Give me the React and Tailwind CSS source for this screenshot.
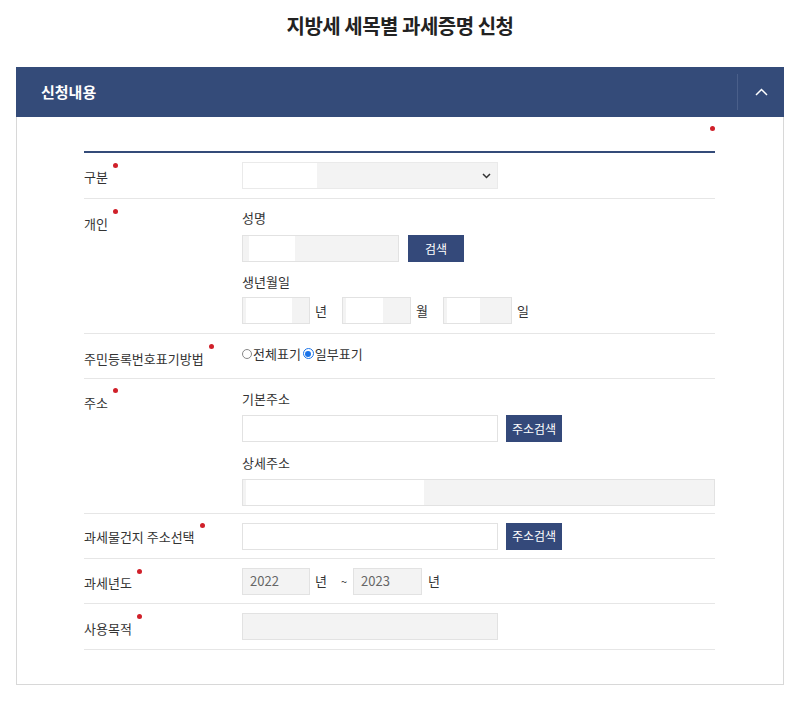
const font = { fontFamily: '"Noto Sans CJK KR", "Noto Sans", sans-serif' };

const Dot = () => (
  <span className="inline-block w-[5px] h-[5px] rounded-full bg-[#d0202a] ml-[5px] relative -top-[12px]" />
);

const Label = ({ children, className = "" }) => (
  <div className={"w-[158px] shrink-0 text-[13px] text-[#333] flex items-center " + className}>
    <span>{children}</span>
    <Dot />
  </div>
);

// input box: gray background with a white patch on the left
const Box = ({ w, white, offset = 3, full, children, className = "" }) => (
  <div
    className={
      "h-[27px] border border-[#e2e2e2] flex items-center relative " +
      (full ? "bg-white " : "bg-[#f3f3f3] ") +
      className
    }
    style={{ width: w }}
  >
    {white ? <div className="h-full bg-white" style={{ width: white, marginLeft: offset }} /> : null}
    {children}
  </div>
);

const Btn = ({ children, w }) => (
  <button
    type="button"
    className="h-[27px] bg-[#34497a] text-white text-[12px] flex items-center justify-center"
    style={{ width: w }}
  >
    {children}
  </button>
);

const SubLabel = ({ children }) => (
  <div className="text-[13px] text-[#333] h-[18px] leading-[18px]">{children}</div>
);

const Row = ({ children, className = "" }) => (
  <div className={"flex border-b border-[#e6e6e6] " + className}>{children}</div>
);

export default function App() {
  return (
    <div className="w-[800px] h-[702px] bg-white" style={font}>
      <h1 className="text-center text-[20px] font-bold text-[#222] pt-[11px] h-[67px] tracking-[-0.5px]">
        지방세 세목별 과세증명 신청
      </h1>

      <div className="mx-[16px] border border-[#d8d8d8] h-[618px]">
        {/* header */}
        <div className="h-[50px] bg-[#344b79] flex items-center -mx-px -mt-px">
          <div className="flex-1 pl-[25px] text-white font-bold text-[15px]">신청내용</div>
          <div className="w-px h-[36px] bg-[#4a5f8a]" />
          <div className="w-[46px] flex items-center justify-center">
            <svg width="13" height="8" viewBox="0 0 13 8" fill="none">
              <polyline points="1,7 6.5,1.5 12,7" stroke="white" strokeWidth="1.5" />
            </svg>
          </div>
        </div>

        {/* form */}
        <div className="ml-[67px] mr-[68px]">
          <div className="flex justify-end pt-[9px] h-[34px]">
            <span className="w-[5px] h-[5px] rounded-full bg-[#d0202a]" />
          </div>
          <div className="h-[2px] bg-[#344b79]" />

          {/* 구분 */}
          <Row className="h-[46px] items-center">
            <Label className="pt-[3px]">구분</Label>
            <Box w={256} className="!border-[#eaeaea]">
              <div className="h-full bg-white w-[74px]" />
              <svg className="absolute right-[6px] top-[10px]" width="9" height="6" viewBox="0 0 9 6" fill="none">
                <polyline points="1,1 4.5,4.5 8,1" stroke="#333" strokeWidth="1.5" />
              </svg>
            </Box>
          </Row>

          {/* 개인 */}
          <Row className="h-[135px] pt-[10px]">
            <Label className="self-start pt-[5px]">개인</Label>
            <div className="flex flex-col">
              <SubLabel>성명</SubLabel>
              <div className="flex gap-[9px] mt-[8px]">
                <Box w={157} white={46} offset={6} />
                <Btn w={56}>검색</Btn>
              </div>
              <div className="mt-[11px]">
                <SubLabel>생년월일</SubLabel>
              </div>
              <div className="flex items-center mt-[6px] text-[13px] text-[#333]">
                <Box w={68} white={46} />
                <span className="ml-[5px] w-[27px]">년</span>
                <Box w={69} white={37} />
                <span className="ml-[5px] w-[27px]">월</span>
                <Box w={69} white={33} />
                <span className="ml-[5px]">일</span>
              </div>
            </div>
          </Row>

          {/* 주민등록번호표기방법 */}
          <Row className="h-[45px] items-center">
            <Label className="pt-[5px]">주민등록번호표기방법</Label>
            <div className="flex items-center text-[13px] text-[#333] -mt-[5px]">
              <span className="w-[10px] h-[10px] rounded-full border border-[#888] mr-[1px]" />
              <span>전체표기</span>
              <span className="w-[11px] h-[11px] rounded-full border border-[#1a73e8] ml-[2px] mr-[1px] flex items-center justify-center">
                <span className="w-[6px] h-[6px] rounded-full bg-[#1a73e8]" />
              </span>
              <span>일부표기</span>
            </div>
          </Row>

          {/* 주소 */}
          <Row className="h-[135px] pt-[11px]">
            <Label className="self-start pt-[3px]">주소</Label>
            <div className="flex flex-col flex-1">
              <SubLabel>기본주소</SubLabel>
              <div className="flex gap-[8px] mt-[7px]">
                <Box w={256} full />
                <Btn w={56}>주소검색</Btn>
              </div>
              <div className="mt-[12px]">
                <SubLabel>상세주소</SubLabel>
              </div>
              <div className="mt-[7px]">
                <Box w={473} white={178} />
              </div>
            </div>
          </Row>

          {/* 과세물건지 */}
          <Row className="h-[45px] items-center">
            <Label className="pt-[2px]">과세물건지 주소선택</Label>
            <div className="flex gap-[8px]">
              <Box w={256} full />
              <Btn w={56}>주소검색</Btn>
            </div>
          </Row>

          {/* 과세년도 */}
          <Row className="h-[45px] items-center">
            <Label className="pt-[4px]">과세년도</Label>
            <div className="flex items-center text-[13px] text-[#333]">
              <Box w={68} className="pl-[7px] text-[#666]">2022</Box>
              <span className="ml-[5px]">년</span>
              <span className="ml-[14px] text-[11px]">~</span>
              <Box w={69} className="ml-[6px] pl-[7px] text-[#666]">2023</Box>
              <span className="ml-[6px]">년</span>
            </div>
          </Row>

          {/* 사용목적 */}
          <Row className="h-[46px] items-center">
            <Label className="pt-[4px]">사용목적</Label>
            <Box w={256} />
          </Row>
        </div>
      </div>
    </div>
  );
}
